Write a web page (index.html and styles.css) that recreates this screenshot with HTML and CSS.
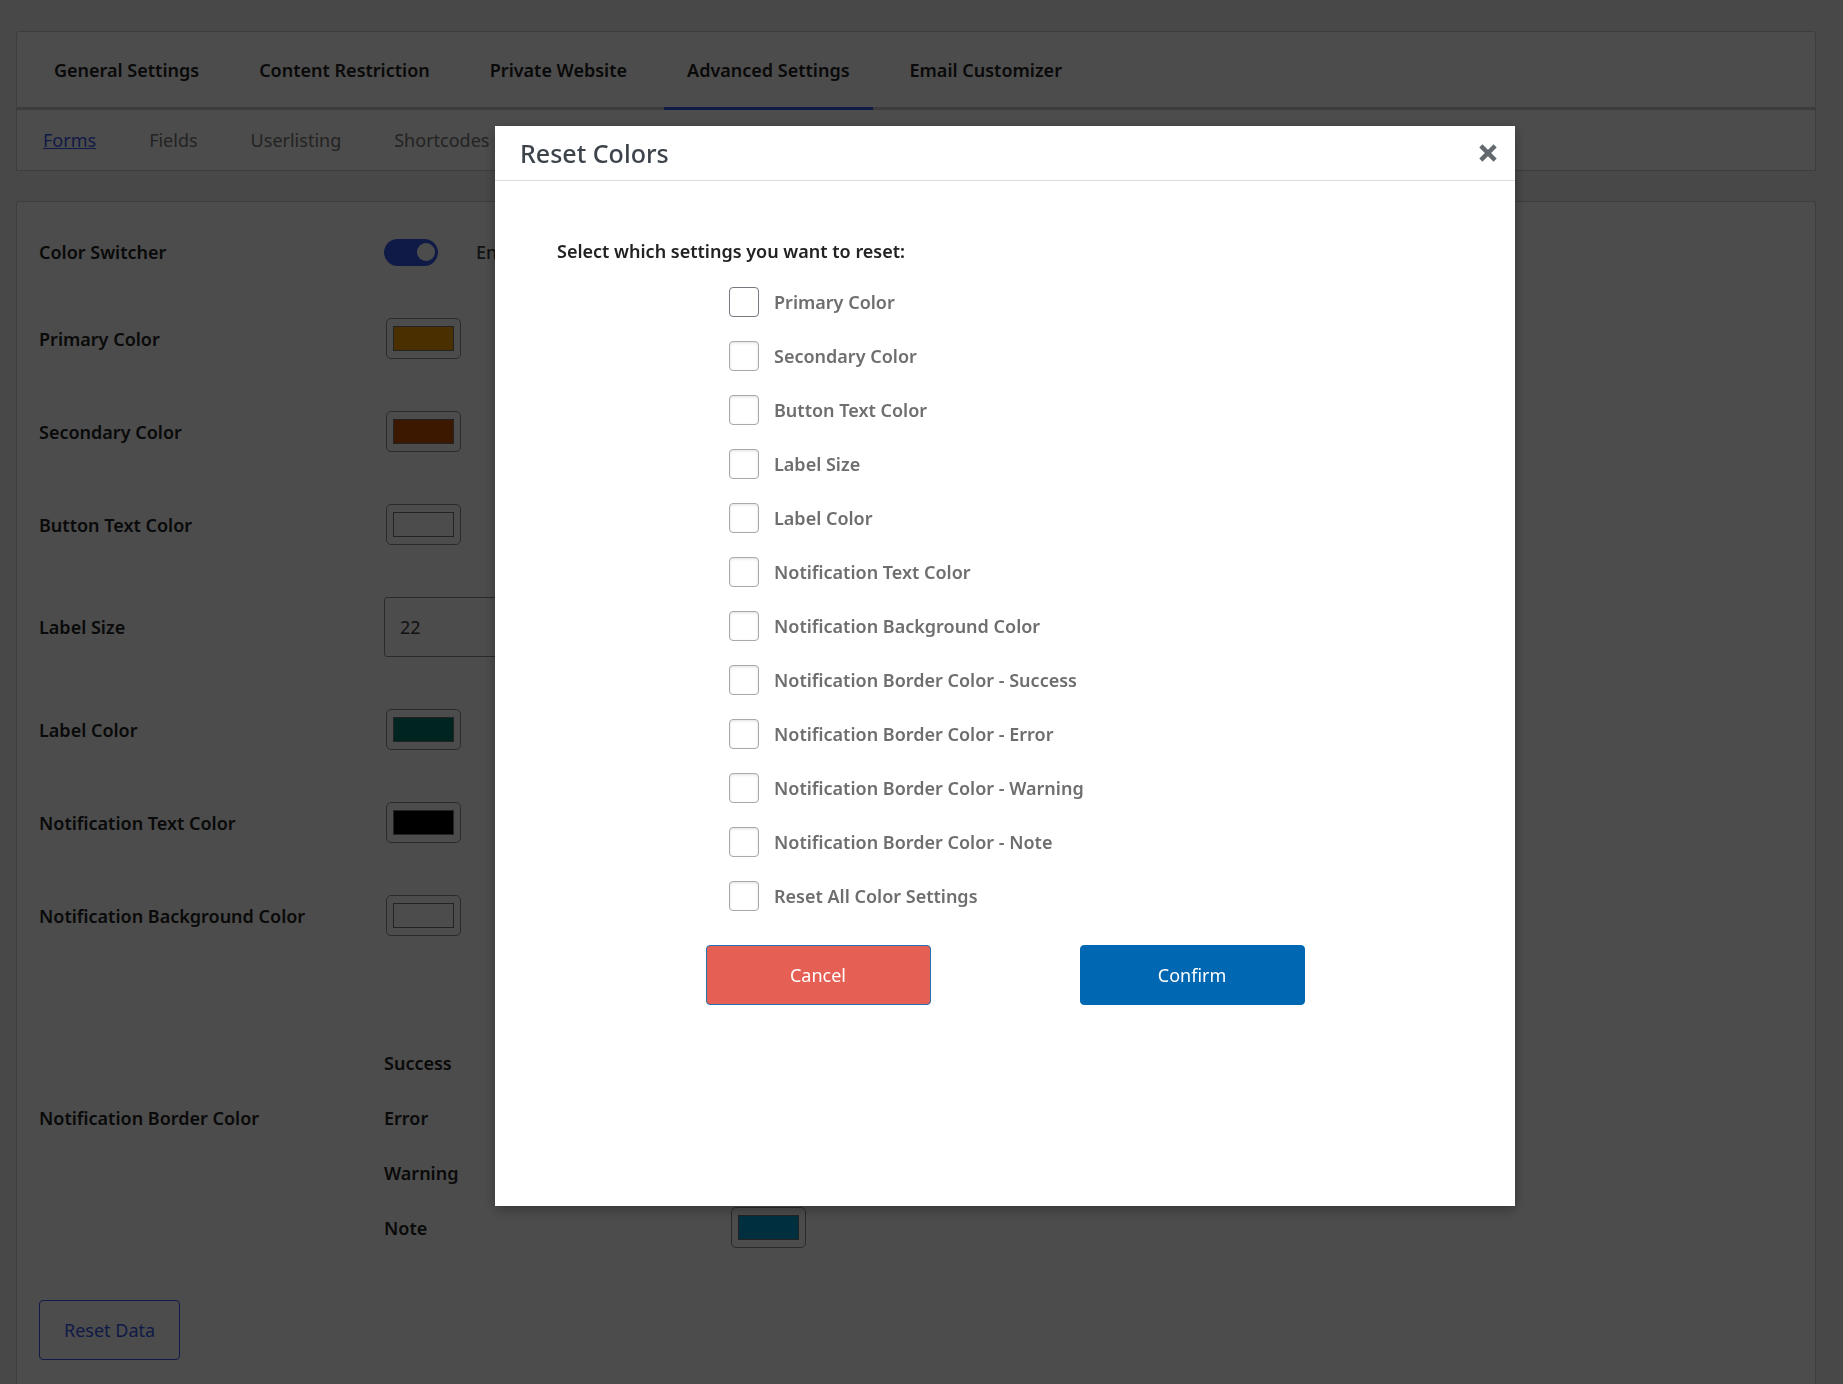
FILE: index.html
```html
<!DOCTYPE html>
<html lang="en">
<head>
<meta charset="utf-8">
<meta name="viewport" content="width=device-width, initial-scale=1">
<title>Advanced Settings</title>
<link rel="stylesheet" href="styles.css">
</head>
<body>
<main class="page">
  <div class="card nav-card">
    <nav class="tabs" aria-label="Settings">
      <a class="tab" href="#general">General Settings</a>
      <a class="tab" href="#content">Content Restriction</a>
      <a class="tab" href="#private">Private Website</a>
      <a class="tab tab-active" href="#advanced">Advanced Settings</a>
      <a class="tab" href="#email">Email Customizer</a>
    </nav>
    <nav class="subtabs" aria-label="Advanced settings">
      <a class="subtab subtab-active" href="#forms">Forms</a>
      <a class="subtab" href="#fields">Fields</a>
      <a class="subtab" href="#userlisting">Userlisting</a>
      <a class="subtab" href="#shortcodes">Shortcodes</a>
    </nav>
  </div>

  <form class="card settings">
    <div class="row">
      <label class="row-label" for="switcher">Color Switcher</label>
      <div class="row-control switch-row">
        <input class="switch" type="checkbox" id="switcher" checked>
        <span class="hint">Enable</span>
      </div>
    </div>
    <div class="row">
      <label class="row-label" for="primary">Primary Color</label>
      <div class="row-control"><input class="color" type="color" id="primary" value="#f79e00"></div>
    </div>
    <div class="row">
      <label class="row-label" for="secondary">Secondary Color</label>
      <div class="row-control"><input class="color" type="color" id="secondary" value="#cb5300"></div>
    </div>
    <div class="row">
      <label class="row-label" for="button-text">Button Text Color</label>
      <div class="row-control"><input class="color" type="color" id="button-text" value="#ffffff"></div>
    </div>
    <div class="row">
      <label class="row-label" for="label-size">Label Size</label>
      <div class="row-control"><input class="number" type="text" inputmode="numeric" id="label-size" value="22"></div>
    </div>
    <div class="row">
      <label class="row-label" for="label-color">Label Color</label>
      <div class="row-control"><input class="color" type="color" id="label-color" value="#007a6b"></div>
    </div>
    <div class="row">
      <label class="row-label" for="notif-text">Notification Text Color</label>
      <div class="row-control"><input class="color" type="color" id="notif-text" value="#000000"></div>
    </div>
    <div class="row">
      <label class="row-label" for="notif-bg">Notification Background Color</label>
      <div class="row-control"><input class="color" type="color" id="notif-bg" value="#ffffff"></div>
    </div>
    <div class="row" role="group" aria-labelledby="border-title">
      <span class="row-label" id="border-title">Notification Border Color</span>
      <div class="row-control border-list">
        <div class="row"><label class="row-label" for="b-success">Success</label><input class="color" type="color" id="b-success" value="#46b450"></div>
        <div class="row"><label class="row-label" for="b-error">Error</label><input class="color" type="color" id="b-error" value="#dc3232"></div>
        <div class="row"><label class="row-label" for="b-warning">Warning</label><input class="color" type="color" id="b-warning" value="#ffb900"></div>
        <div class="row"><label class="row-label" for="b-note">Note</label><input class="color" type="color" id="b-note" value="#00a0d2"></div>
      </div>
    </div>
    <button class="btn btn-outline" type="button">Reset Data</button>
  </form>
</main>

<div class="overlay">
  <div class="modal" role="dialog" aria-modal="true" aria-labelledby="modal-title">
    <header class="modal-head">
      <h1 class="modal-title" id="modal-title">Reset Colors</h1>
      <button class="close" type="button" aria-label="Close">
        <svg width="18" height="18" viewBox="0 0 18 18" aria-hidden="true"><path d="M3.4 3.4L14.6 14.6M14.6 3.4L3.4 14.6" stroke="currentColor" stroke-width="4.4" stroke-linecap="square" fill="none"/></svg>
      </button>
    </header>
    <form class="modal-body">
      <p class="modal-lead">Select which settings you want to reset:</p>
      <div class="checks">
        <label class="check"><input class="box" type="checkbox"><span>Primary Color</span></label>
        <label class="check"><input class="box box-dim" type="checkbox"><span>Secondary Color</span></label>
        <label class="check"><input class="box box-dim" type="checkbox"><span>Button Text Color</span></label>
        <label class="check"><input class="box box-dim" type="checkbox"><span>Label Size</span></label>
        <label class="check"><input class="box box-dim" type="checkbox"><span>Label Color</span></label>
        <label class="check"><input class="box box-dim" type="checkbox"><span>Notification Text Color</span></label>
        <label class="check"><input class="box box-dim" type="checkbox"><span>Notification Background Color</span></label>
        <label class="check"><input class="box box-dim" type="checkbox"><span>Notification Border Color - Success</span></label>
        <label class="check"><input class="box box-dim" type="checkbox"><span>Notification Border Color - Error</span></label>
        <label class="check"><input class="box box-dim" type="checkbox"><span>Notification Border Color - Warning</span></label>
        <label class="check"><input class="box box-dim" type="checkbox"><span>Notification Border Color - Note</span></label>
        <label class="check"><input class="box box-dim" type="checkbox"><span>Reset All Color Settings</span></label>
      </div>
      <div class="actions">
        <button class="btn btn-wide btn-cancel" type="button">Cancel</button>
        <button class="btn btn-wide btn-confirm" type="button">Confirm</button>
      </div>
    </form>
  </div>
</div>
</body>
</html>
```
FILE: styles.css
```css
* {
  box-sizing: border-box;
}

html,
body {
  height: 100%;
}

body {
  margin: 0;
  overflow: hidden;
  background: #f0f0f1;
  color: #222;
  font-family: "Noto Sans", "Open Sans", sans-serif;
  font-size: 18px;
  line-height: 28px;
}

input,
button {
  margin: 0;
  font: inherit;
}

.page {
  display: flex;
  flex-direction: column;
  gap: 30px;
  min-height: 100%;
  padding: 31px 27px 0 16px;
}

.card {
  border: 1px solid #ccc;
  border-radius: 3px;
  background: #fff;
}

.nav-card {
  border-radius: 3px 3px 0 0;
}

.tabs {
  display: flex;
  gap: 14px;
  padding: 0 14px;
  border-bottom: 3px solid #ccc;
}

.tab {
  margin-bottom: -3px;
  padding: 24px 23px 23px;
  border-bottom: 3px solid transparent;
  color: #222;
  font-weight: 600;
  text-decoration: none;
}

.tab-active {
  border-bottom-color: #3858e9;
}

.subtabs {
  display: flex;
  gap: 53px;
  padding: 16px 26px;
}

.subtab {
  color: #757575;
  text-decoration: none;
}

.subtab-active {
  color: #3858e9;
  text-decoration: underline;
}

.settings {
  flex: 1;
  display: flex;
  flex-direction: column;
  align-items: flex-start;
  gap: 52px;
  padding: 36px 22px 30px;
  border-bottom: 0;
  border-radius: 3px 3px 0 0;
}

.row {
  display: flex;
  align-items: center;
  width: 100%;
}

.row-label {
  flex: 0 0 345px;
  font-weight: 600;
}

.row-control {
  display: flex;
  flex: 1;
}

.switch-row {
  align-items: center;
  gap: 38px;
}

.hint {
  font-weight: 500;
  color: #3c3c3c;
}

.switch {
  display: flex;
  align-items: center;
  justify-content: flex-end;
  width: 54px;
  height: 27px;
  padding: 3px;
  border-radius: 14px;
  background: #3858e9;
  appearance: none;
}

.switch::before {
  width: 18px;
  height: 18px;
  border-radius: 50%;
  background: #fff;
  content: "";
}

.color {
  width: 75px;
  height: 41px;
  margin-left: 2px;
  padding: 7px 6px;
  border: 1px solid #8c8f94;
  border-radius: 5px;
  background: #fff;
}

.color::-webkit-color-swatch-wrapper {
  padding: 0;
}

.color::-webkit-color-swatch {
  border: 1px solid #767676;
  border-radius: 0;
}

.number {
  width: 400px;
  height: 60px;
  padding: 0 15px;
  border: 1px solid #8c8f94;
  border-radius: 3px;
  background: #fff;
  color: #3c3c3c;
}

.border-list {
  flex-direction: column;
  gap: 14px;
  padding-top: 54px;
}

.btn {
  height: 60px;
  padding: 0 24px;
  border: 1px solid #3858e9;
  border-radius: 4px;
  background: #fff;
  color: #3858e9;
}

.overlay {
  position: fixed;
  inset: 0;
  padding: 126px 328px 0 495px;
  background: rgba(0, 0, 0, 0.7);
}

.modal {
  background: #fff;
  box-shadow: 0 4px 12px rgba(0, 0, 0, 0.3);
}

.modal-head {
  display: flex;
  align-items: center;
  justify-content: space-between;
  height: 55px;
  padding: 0 18px 0 25px;
  border-bottom: 1px solid #dcdcde;
}

.modal-title {
  margin: 0;
  color: #3c434a;
  font-size: 25px;
  font-weight: 500;
}

.close {
  display: flex;
  padding: 0;
  border: 0;
  background: none;
  color: #646970;
}

.modal-body {
  padding: 56px 62px 201px;
}

.modal-lead {
  margin: 0 0 22px;
  font-weight: 600;
}

.checks {
  display: flex;
  flex-direction: column;
  align-items: flex-start;
  gap: 24px;
  padding-left: 172px;
}

.check {
  display: flex;
  align-items: center;
  gap: 15px;
  color: #6e6e6e;
  font-weight: 600;
}

.box {
  width: 30px;
  height: 30px;
  border: 1px solid #757a80;
  border-radius: 4px;
  background: #fff;
  appearance: none;
}

.box-dim {
  border-color: #aaa;
  box-shadow: inset 0 1px 3px rgba(0, 0, 0, 0.12);
}

.actions {
  display: flex;
  justify-content: center;
  gap: 149px;
  margin-top: 34px;
}

.btn-wide {
  width: 225px;
  border-color: #2271b1;
  color: #fff;
}

.btn-cancel {
  background: #e65f54;
}

.btn-confirm {
  border-color: #0068b3;
  background: #0068b3;
}
```
